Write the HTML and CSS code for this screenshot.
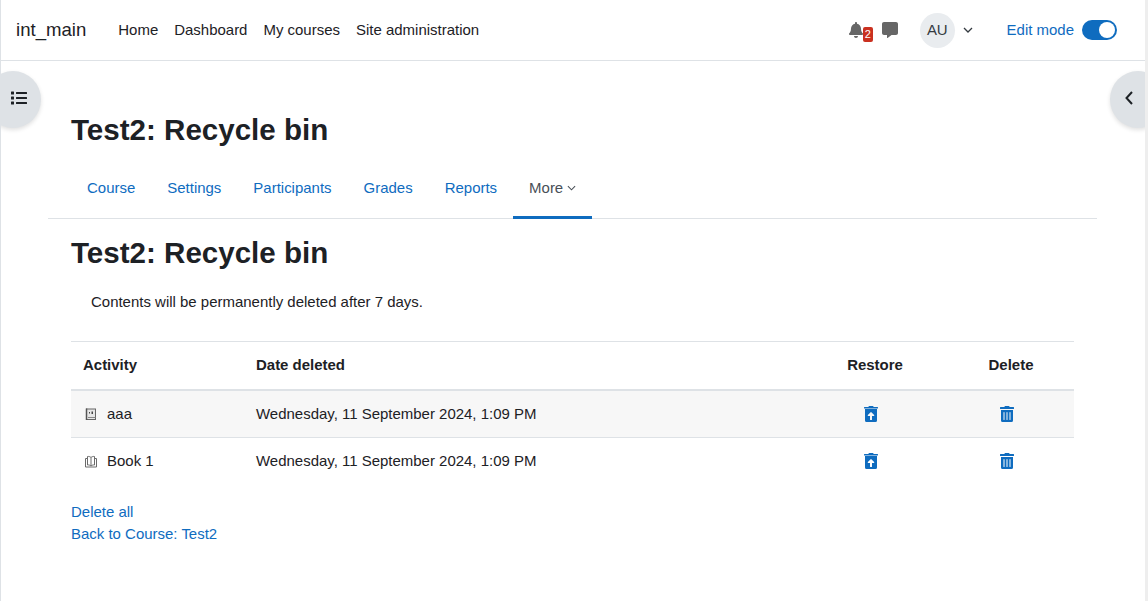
FILE: index.html
```html
<!DOCTYPE html>
<html lang="en">
<head>
<meta charset="utf-8">
<title>Test2: Recycle bin</title>
<link rel="stylesheet" href="styles.css">
</head>
<body>
<div class="frame">
<header class="topbar">
  <a class="brand">int_main</a>
  <nav class="primary">
    <a>Home</a><a>Dashboard</a><a>My courses</a><a>Site administration</a>
  </nav>
  <div class="usernav">
    <span class="bell">
      <svg class="ic16" viewBox="0 0 448 512"><path class="grey" d="M224 512c35.320 0 63.970-28.650 63.970-64H160.030c0 35.350 28.650 64 63.970 64zm215.390-149.710c-19.320-20.760-55.470-51.990-55.470-154.290 0-77.700-54.480-139.900-127.940-155.160V32c0-17.670-14.320-32-31.980-32s-31.980 14.330-31.980 32v20.840C118.560 68.100 64.080 130.300 64.080 208c0 102.300-36.150 133.530-55.470 154.290-6 6.450-8.660 14.160-8.610 21.710.110 16.400 12.980 32 32.100 32h383.800c19.120 0 32-15.600 32.100-32 .050-7.550-2.610-15.270-8.610-21.710z"/></svg>
      <span class="badge">2</span>
    </span>
    <svg class="ic16 msg" viewBox="0 0 512 512"><path class="grey" d="M448 0H64C28.700 0 0 28.700 0 64v288c0 35.300 28.700 64 64 64h96v84c0 9.800 11.200 15.500 19.100 9.700L304 416h144c35.300 0 64-28.700 64-64V64c0-35.300-28.700-64-64-64z"/></svg>
    <span class="avatar">AU</span>
    <svg class="caret" viewBox="0 0 10 6"><path d="M1 1l4 4 4-4" fill="none" stroke="#343a40" stroke-width="1.300"/></svg>
    <span class="editlabel">Edit mode</span>
    <span class="toggle"><span class="knob"></span></span>
  </div>
</header>
<button class="drawer left" aria-label="Open course index">
  <svg viewBox="0 0 512 512" width="16" height="16"><path fill="#1d2125" d="M80 368H16a16 16 0 0 0-16 16v64a16 16 0 0 0 16 16h64a16 16 0 0 0 16-16v-64a16 16 0 0 0-16-16zm0-320H16A16 16 0 0 0 0 64v64a16 16 0 0 0 16 16h64a16 16 0 0 0 16-16V64a16 16 0 0 0-16-16zm0 160H16a16 16 0 0 0-16 16v64a16 16 0 0 0 16 16h64a16 16 0 0 0 16-16v-64a16 16 0 0 0-16-16zm416 176H176a16 16 0 0 0-16 16v32a16 16 0 0 0 16 16h320a16 16 0 0 0 16-16v-32a16 16 0 0 0-16-16zm0-320H176a16 16 0 0 0-16 16v32a16 16 0 0 0 16 16h320a16 16 0 0 0 16-16V80a16 16 0 0 0-16-16zm0 160H176a16 16 0 0 0-16 16v32a16 16 0 0 0 16 16h320a16 16 0 0 0 16-16v-32a16 16 0 0 0-16-16z"/></svg>
</button>
<button class="drawer right" aria-label="Open block drawer">
  <svg viewBox="0 0 10 16" width="10" height="16"><path d="M8 2L2.500 8 8 14" fill="none" stroke="#1d2125" stroke-width="2"/></svg>
</button>
<main class="page">
  <h1 class="title">Test2: Recycle bin</h1>
  <nav class="tabs">
    <a>Course</a><a>Settings</a><a>Participants</a><a>Grades</a><a>Reports</a>
    <a class="active">More <svg class="morecaret" viewBox="0 0 10 6"><path d="M1 1l4 4 4-4" fill="none" stroke="#495057" stroke-width="1.200"/></svg></a>
  </nav>
  <section class="content">
    <h2 class="title second">Test2: Recycle bin</h2>
    <p class="note">Contents will be permanently deleted after 7 days.</p>
    <table class="bin">
      <thead>
        <tr><th class="c1">Activity</th><th class="c2">Date deleted</th><th class="c3">Restore</th><th class="c4">Delete</th></tr>
      </thead>
      <tbody>
        <tr class="odd">
          <td><span class="activity">
            <svg class="modicon" viewBox="0 0 16 16"><rect x="3.500" y="3" width="9" height="10.500" fill="#e6e6e6" stroke="#666"/><path d="M3.500 2.500v11.500" stroke="#555" stroke-width="1.500"/><path d="M5 11.500h7.500" stroke="#888"/><path d="M6 6h1v1.500h-1zM8.500 5.500h1.500V8H8.500z" fill="#444"/></svg>
            aaa</span></td>
          <td>Wednesday, 11 September 2024, 1:09 PM</td>
          <td class="act"><svg class="ic16" viewBox="0 0 448 512"><path class="b" d="M32 464a48 48 0 0 0 48 48h288a48 48 0 0 0 48-48V96H32zm91.310-172.800l89.380-94.260a15.410 15.410 0 0 1 22.620 0l89.380 94.260c10.080 10.620 2.940 28.800-11.320 28.800H256v112a16 16 0 0 1-16 16h-32a16 16 0 0 1-16-16V320h-57.370c-14.260 0-21.400-18.180-11.320-28.800zM432 32H312l-9.400-18.700A24 24 0 0 0 281.100 0H166.800a23.720 23.720 0 0 0-21.400 13.300L136 32H16A16 16 0 0 0 0 48v16a16 16 0 0 0 16 16h416a16 16 0 0 0 16-16V48a16 16 0 0 0-16-16z"/></svg></td>
          <td class="act"><svg class="ic16" viewBox="0 0 448 512"><path class="b" d="M32 464a48 48 0 0 0 48 48h288a48 48 0 0 0 48-48V128H32zm272-256a16 16 0 0 1 32 0v224a16 16 0 0 1-32 0zm-96 0a16 16 0 0 1 32 0v224a16 16 0 0 1-32 0zm-96 0a16 16 0 0 1 32 0v224a16 16 0 0 1-32 0zM432 32H312l-9.400-18.700A24 24 0 0 0 281.100 0H166.800a23.720 23.720 0 0 0-21.400 13.300L136 32H16A16 16 0 0 0 0 48v32a16 16 0 0 0 16 16h416a16 16 0 0 0 16-16V48a16 16 0 0 0-16-16z"/></svg></td>
        </tr>
        <tr>
          <td><span class="activity">
            <svg class="modicon" viewBox="0 0 16 16"><g fill="none" stroke="#6a6a6a"><path d="M8 4.500C7 3.500 5.500 3.300 4.500 3.500v8.500C5.500 11.800 7 12 8 13c1-1 2.500-1.200 3.500-1V3.500C10.500 3.300 9 3.500 8 4.500zM8 4.500V13"/><path d="M4.500 5.500h-2v8.500h11V5.500h-2"/></g></svg>
            Book 1</span></td>
          <td>Wednesday, 11 September 2024, 1:09 PM</td>
          <td class="act"><svg class="ic16" viewBox="0 0 448 512"><path class="b" d="M32 464a48 48 0 0 0 48 48h288a48 48 0 0 0 48-48V96H32zm91.310-172.800l89.380-94.260a15.410 15.410 0 0 1 22.620 0l89.380 94.260c10.080 10.620 2.940 28.800-11.320 28.800H256v112a16 16 0 0 1-16 16h-32a16 16 0 0 1-16-16V320h-57.370c-14.260 0-21.400-18.180-11.320-28.800zM432 32H312l-9.400-18.700A24 24 0 0 0 281.100 0H166.800a23.720 23.720 0 0 0-21.400 13.300L136 32H16A16 16 0 0 0 0 48v16a16 16 0 0 0 16 16h416a16 16 0 0 0 16-16V48a16 16 0 0 0-16-16z"/></svg></td>
          <td class="act"><svg class="ic16" viewBox="0 0 448 512"><path class="b" d="M32 464a48 48 0 0 0 48 48h288a48 48 0 0 0 48-48V128H32zm272-256a16 16 0 0 1 32 0v224a16 16 0 0 1-32 0zm-96 0a16 16 0 0 1 32 0v224a16 16 0 0 1-32 0zm-96 0a16 16 0 0 1 32 0v224a16 16 0 0 1-32 0zM432 32H312l-9.400-18.700A24 24 0 0 0 281.100 0H166.800a23.720 23.720 0 0 0-21.400 13.300L136 32H16A16 16 0 0 0 0 48v32a16 16 0 0 0 16 16h416a16 16 0 0 0 16-16V48a16 16 0 0 0-16-16z"/></svg></td>
        </tr>
      </tbody>
    </table>
    <div class="links"><a>Delete all</a><a>Back to Course: Test2</a></div>
  </section>
</main>
</div>
</body>
</html>
```
FILE: styles.css
```css
* { box-sizing: border-box; }
html { margin: 0; height: 100%; overflow: hidden; }
body { position: relative; margin: 0; height: 100%; font-family: "Liberation Sans", Arial, sans-serif; font-size: 14.98px; line-height: 22.5px; color: #1d2125; background: #fff; border-right: 1px solid #eee; }
body::after { content: ""; position: absolute; top: 14px; right: -1px; bottom: 0; width: 1px; background: #bbb; }
a { color: #0f6cbf; text-decoration: none; }
.frame { position: relative; width: 1147px; height: 601px; border-left: 1px solid #dee2e6; border-right: 2px solid #eee; overflow: hidden; }
.topbar { height: 61px; border-bottom: 1px solid #dee2e6; display: flex; align-items: center; padding: 0 28px 0 15px; }
.brand { color: #1d2125; font-size: 18.6px; margin-right: 32px; }
.primary { display: flex; gap: 16px; }
.primary a { color: #1d2125; }
.usernav { margin-left: auto; display: flex; align-items: center; }
.ic16 { width: 16px; height: 16px; display: block; }
.grey { fill: #666; }
.bell { position: relative; display: block; width: 16px; height: 16px; }
.badge { position: absolute; left: 15px; top: 5px; width: 10px; height: 15px; border-radius: 2px; background: #ca3120; color: #fff; font-size: 11px; line-height: 15px; text-align: center; }
.msg { margin-left: 18px; }
.avatar { width: 35px; height: 35px; border-radius: 50%; background: #e9ecef; margin-left: 22px; text-align: center; line-height: 34px; color: #343a40; }
.caret { width: 10px; height: 6px; margin-left: 8px; }
.editlabel { color: #0f6cbf; margin-left: 33.8px; }
.toggle { width: 35px; height: 20px; border-radius: 10px; background: #0f6cbf; margin-left: 8px; display: flex; justify-content: flex-end; align-items: center; padding-right: 2px; }
.knob { width: 16px; height: 16px; border-radius: 50%; background: #fff; }
.drawer { position: absolute; top: 71px; width: 56px; height: 57px; border: 0; padding: 0 0 3px; background: #dee2e6; display: flex; align-items: center; box-shadow: 0 2px 4px rgba(0,0,0,.12); }
.drawer.left { left: -16px; border-radius: 50%; justify-content: flex-end; padding-right: 14px; }
.drawer.right { left: 1109px; border-radius: 50%; padding-left: 14px; }
.page { padding: 0 48px 0 47px; }
.title { margin: 0; font-size: 29.55px; line-height: 36px; font-weight: 700; color: #1d2125; padding-left: 23px; }
.page > .title { padding-top: 51px; }
.tabs { display: flex; margin-top: 16px; height: 55px; border-bottom: 1px solid #dee2e6; padding-left: 23px; }
.tabs a { padding: 13px 16px 0; height: 55px; }
.tabs a.active { color: #495057; border-bottom: 3px solid #0f6cbf; }
.morecaret { width: 9px; height: 6px; vertical-align: 2px; }
.content { padding: 16px 23px 0; }
.content .second { padding-left: 0; }
.note { margin: 20px 0 0; padding-left: 20px; }
.bin { width: 1003px; margin-top: 27px; border-collapse: collapse; table-layout: fixed; }
.bin th { text-align: left; font-weight: 700; padding: 12px; height: 49px; border-top: 1px solid #dee2e6; border-bottom: 2px solid #dee2e6; }
.bin td { padding: 12px; line-height: 22px; border-bottom: 1px solid #dee2e6; }
.bin tbody tr:last-child td { border-bottom: 0; }
.bin .odd td { background: #f7f7f7; }
.c1 { width: 173px; }
.c2 { width: 558px; }
.bin .c3 { width: 146px; text-align: center; }
.bin .c4 { width: 126px; text-align: center; }
.activity { display: flex; align-items: center; gap: 8px; }
.modicon { width: 16px; height: 16px; flex: none; }
.act { text-align: center; }
.act svg { display: inline-block; vertical-align: top; margin: 3px 8px 0 0; }
.b { fill: #0f6cbf; }
.links { margin-top: 16.6px; display: flex; flex-direction: column; line-height: 22.4px; }
```
